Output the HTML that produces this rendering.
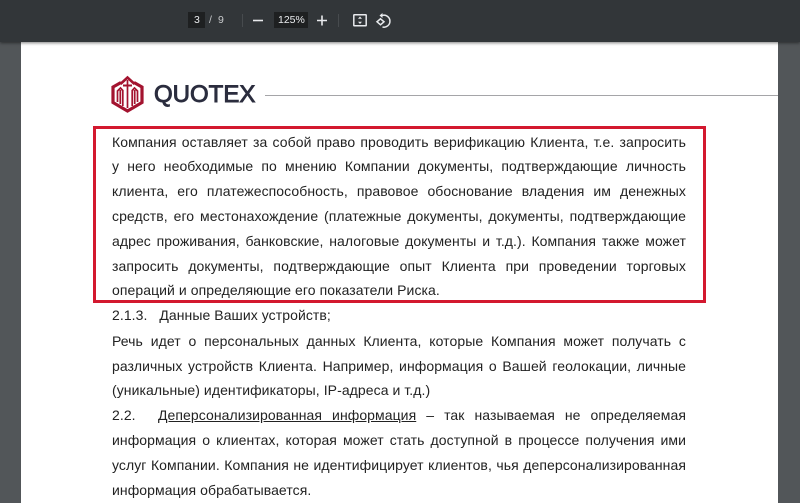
<!DOCTYPE html>
<html><head><meta charset="utf-8"><style>
html,body{margin:0;padding:0;width:800px;height:503px;overflow:hidden;background:#525659;font-family:"Liberation Sans",sans-serif}
#bar{position:absolute;left:0;top:0;width:800px;height:42px;background:#323639;box-shadow:0 1px 3px rgba(0,0,0,.5);z-index:3}
#page{position:absolute;left:21px;top:42px;width:757px;height:461px;background:#fff}
.l{position:absolute;left:112px;width:574px;height:20px;line-height:20px;font-size:14px;color:#222;white-space:nowrap;text-align:justify;text-align-last:justify;z-index:2;letter-spacing:.07px;filter:blur(.25px)}
.n{text-align:left;text-align-last:left}
.t{position:absolute;color:#e8eaed;font-size:10.500px;line-height:14px;z-index:4;filter:blur(.3px)}
.b{position:absolute;background:#1e2021;z-index:4}
.s{position:absolute;top:14px;width:1px;height:13px;background:#474b4e;z-index:4}
</style></head><body>
<div id="bar"></div>
<div class="b" style="left:188px;top:12px;width:17px;height:16px"></div>
<div class="t" style="left:194px;top:13px">3</div>
<div class="t" style="left:209px;top:13px;color:#c8cacc">/</div>
<div class="t" style="left:218px;top:13px;color:#c8cacc">9</div>
<div class="s" style="left:242px"></div>
<svg style="position:absolute;left:250px;top:12px;z-index:4" width="16" height="16"><path d="M3 8.500H13" stroke="#e8eaed" stroke-width="1.600"/></svg>
<div class="b" style="left:274px;top:12px;width:34px;height:16px"></div>
<div class="t" style="left:278px;top:13px">125%</div>
<svg style="position:absolute;left:314px;top:12px;z-index:4" width="16" height="16"><path d="M3 8.500H13M8 3.500V13.500" stroke="#e8eaed" stroke-width="1.600"/></svg>
<div class="s" style="left:338px"></div>
<svg style="position:absolute;left:352px;top:13px;z-index:4" width="16" height="15"><rect x="1.800" y="1.800" width="12.400" height="11" rx=".5" fill="none" stroke="#e8eaed" stroke-width="1.500"/><path d="M8 3.500L6 5.800H10ZM8 11L6 8.700H10Z" fill="#e8eaed"/></svg>
<svg style="position:absolute;left:375px;top:12px;z-index:4" width="17" height="17"><path d="M7 3.500A6 6 0 1 1 7.500 15" fill="none" stroke="#e8eaed" stroke-width="1.500"/><path d="M5.500 6.800L9 9.800 5.500 12.800 2 9.800Z" fill="none" stroke="#e8eaed" stroke-width="1.500"/><path d="M7.500 1V6L4.500 3.500Z" fill="#e8eaed"/></svg>
<div id="page"></div>
<svg style="position:absolute;left:110px;top:75px;z-index:2;filter:blur(.3px)" width="36" height="38" viewBox="0 0 36 38"><path d="M11 7.500L3 12V27.500L17.500 36 32 27.500V12L24 7.500" fill="none" stroke="#a3132f" stroke-width="3.200"/><path d="M10.500 9L17.500 2.500 24.500 9" fill="none" stroke="#a3132f" stroke-width="2.600"/><path d="M7.500 27V16L10.500 13 12.800 15.500V31M17.500 33V5M22.200 31V15.500L24.500 13 27.500 16V27M10.300 15V29M24.700 15V29" fill="none" stroke="#a3132f" stroke-width="1.700"/><path d="M13 10.500H22" stroke="#a3132f" stroke-width="2"/></svg>
<div style="position:absolute;left:154px;top:80px;font-size:24px;line-height:30px;color:#2b2d3e;-webkit-text-stroke:.9px #2b2d3e;z-index:2;filter:blur(.25px)">QUOTEX</div>
<div style="position:absolute;left:265px;top:95px;width:513px;height:1px;background:#a5a5a8;z-index:2"></div>
<div style="position:absolute;left:93px;top:126px;width:607px;height:171px;border:3px solid #d3182f;z-index:2"></div>
<div class="l" style="top:132px">Компания оставляет за собой право проводить верификацию Клиента, т.е. запросить</div>
<div class="l" style="top:156px">у него необходимые по мнению Компании документы, подтверждающие личность</div>
<div class="l" style="top:181px">клиента, его платежеспособность, правовое обоснование владения им денежных</div>
<div class="l" style="top:206px">средств, его местонахождение (платежные документы, документы, подтверждающие</div>
<div class="l" style="top:231px">адрес проживания, банковские, налоговые документы и т.д.). Компания также может</div>
<div class="l" style="top:256px">запросить документы, подтверждающие опыт Клиента при проведении торговых</div>
<div class="l n" style="top:280px">операций и определяющие его показатели Риска.</div>
<div class="l n" style="top:305px">2.1.3.&nbsp;&nbsp; Данные Ваших устройств;</div>
<div class="l" style="top:331px">Речь идет о персональных данных Клиента, которые Компания может получать с</div>
<div class="l" style="top:356px">различных устройств Клиента. Например, информация о Вашей геолокации, личные</div>
<div class="l n" style="top:380px">(уникальные) идентификаторы, IP-адреса и т.д.)</div>
<div class="l n" style="top:405px;left:112px">2.2.</div>
<div class="l" style="top:405px;left:158px;width:528px"><span style="text-decoration:underline">Деперсонализированная информация</span> – так называемая не определяемая</div>
<div class="l" style="top:430px">информация о клиентах, которая может стать доступной в процессе получения ими</div>
<div class="l" style="top:455px">услуг Компании. Компания не идентифицирует клиентов, чья деперсонализированная</div>
<div class="l n" style="top:480px">информация обрабатывается.</div>
</body></html>
